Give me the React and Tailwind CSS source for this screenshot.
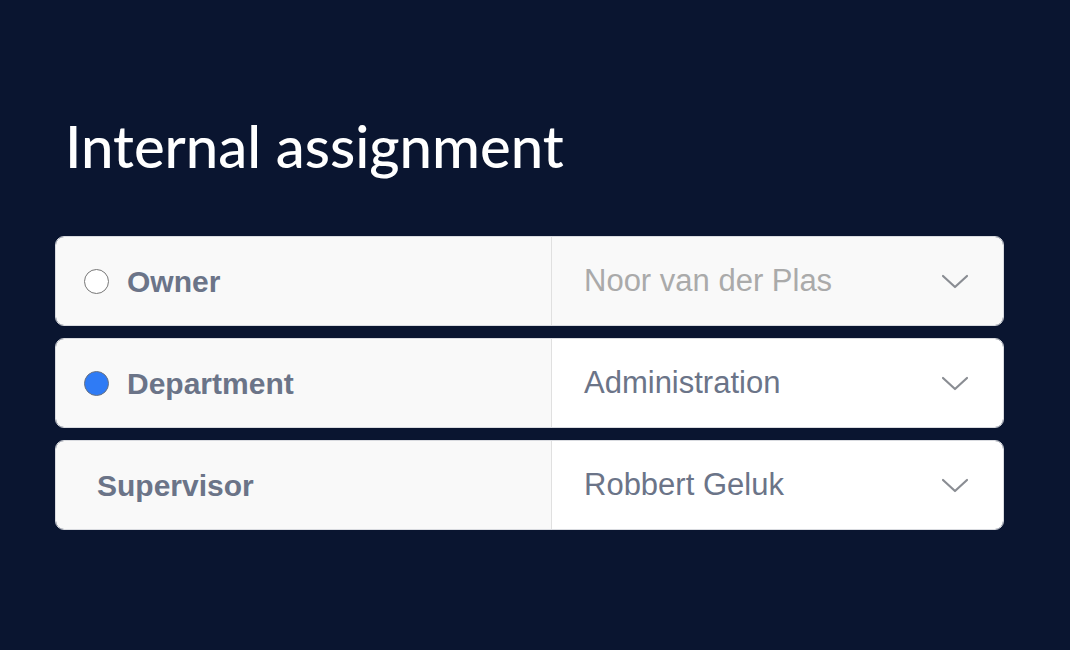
const ROWS = [
  { label: "Owner", radio: "off", value: "Noor van der Plas", placeholder: true },
  { label: "Department", radio: "on", value: "Administration" },
  { label: "Supervisor", radio: null, value: "Robbert Geluk" },
];

function Chevron() {
  return (
    <svg width="28" height="16" viewBox="0 0 28 16" fill="none" className="shrink-0">
      <path d="M2 3l12 11L26 3" stroke="#8a8d93" strokeWidth="2.2" strokeLinecap="round" strokeLinejoin="round" />
    </svg>
  );
}

function Row({ row }) {
  return (
    <div className="flex h-[90px] rounded-[9px] border border-[#d9dbe0] overflow-hidden">
      <div className="flex w-[496px] items-center bg-[#f9f9f9] border-r border-[#e0e0e0] pl-[28px]">
        {row.radio === "off" && (
          <span className="mr-[18px] h-[25px] w-[25px] rounded-full border-[1.5px] border-[#777] bg-white" />
        )}
        {row.radio === "on" && (
          <span className="mr-[18px] h-[25px] w-[25px] rounded-full border border-[#6a7280] bg-[#2f7bf5]" />
        )}
        <span
          className={`text-[30px] font-semibold text-[#6b7488] ${row.radio ? "" : "pl-[13px]"}`}
        >
          {row.label}
        </span>
      </div>
      <div
        className={`flex flex-1 items-center justify-between pl-[32px] pr-[34px] ${
          row.placeholder ? "bg-[#f9f9f9]" : "bg-white"
        }`}
      >
        <span className={`text-[31px] ${row.placeholder ? "text-[#aaaaaa]" : "text-[#6b7488]"}`}>
          {row.value}
        </span>
        <Chevron />
      </div>
    </div>
  );
}

export default function App() {
  return (
    <div
      className="h-[650px] w-[1070px] bg-[#0a1530] px-[55px] pt-[117px]"
      style={{ fontFamily: "'Liberation Sans', Arial, sans-serif" }}
    >
      <h1
        className="pl-[10px] text-[58px] font-medium leading-none text-white"
        style={{ fontFamily: "Lato, 'Open Sans', sans-serif" }}
      >
        Internal assignment
      </h1>
      <div className="mt-[61px] flex w-[949px] flex-col gap-[12px]">
        {ROWS.map((r) => (
          <Row key={r.label} row={r} />
        ))}
      </div>
    </div>
  );
}
